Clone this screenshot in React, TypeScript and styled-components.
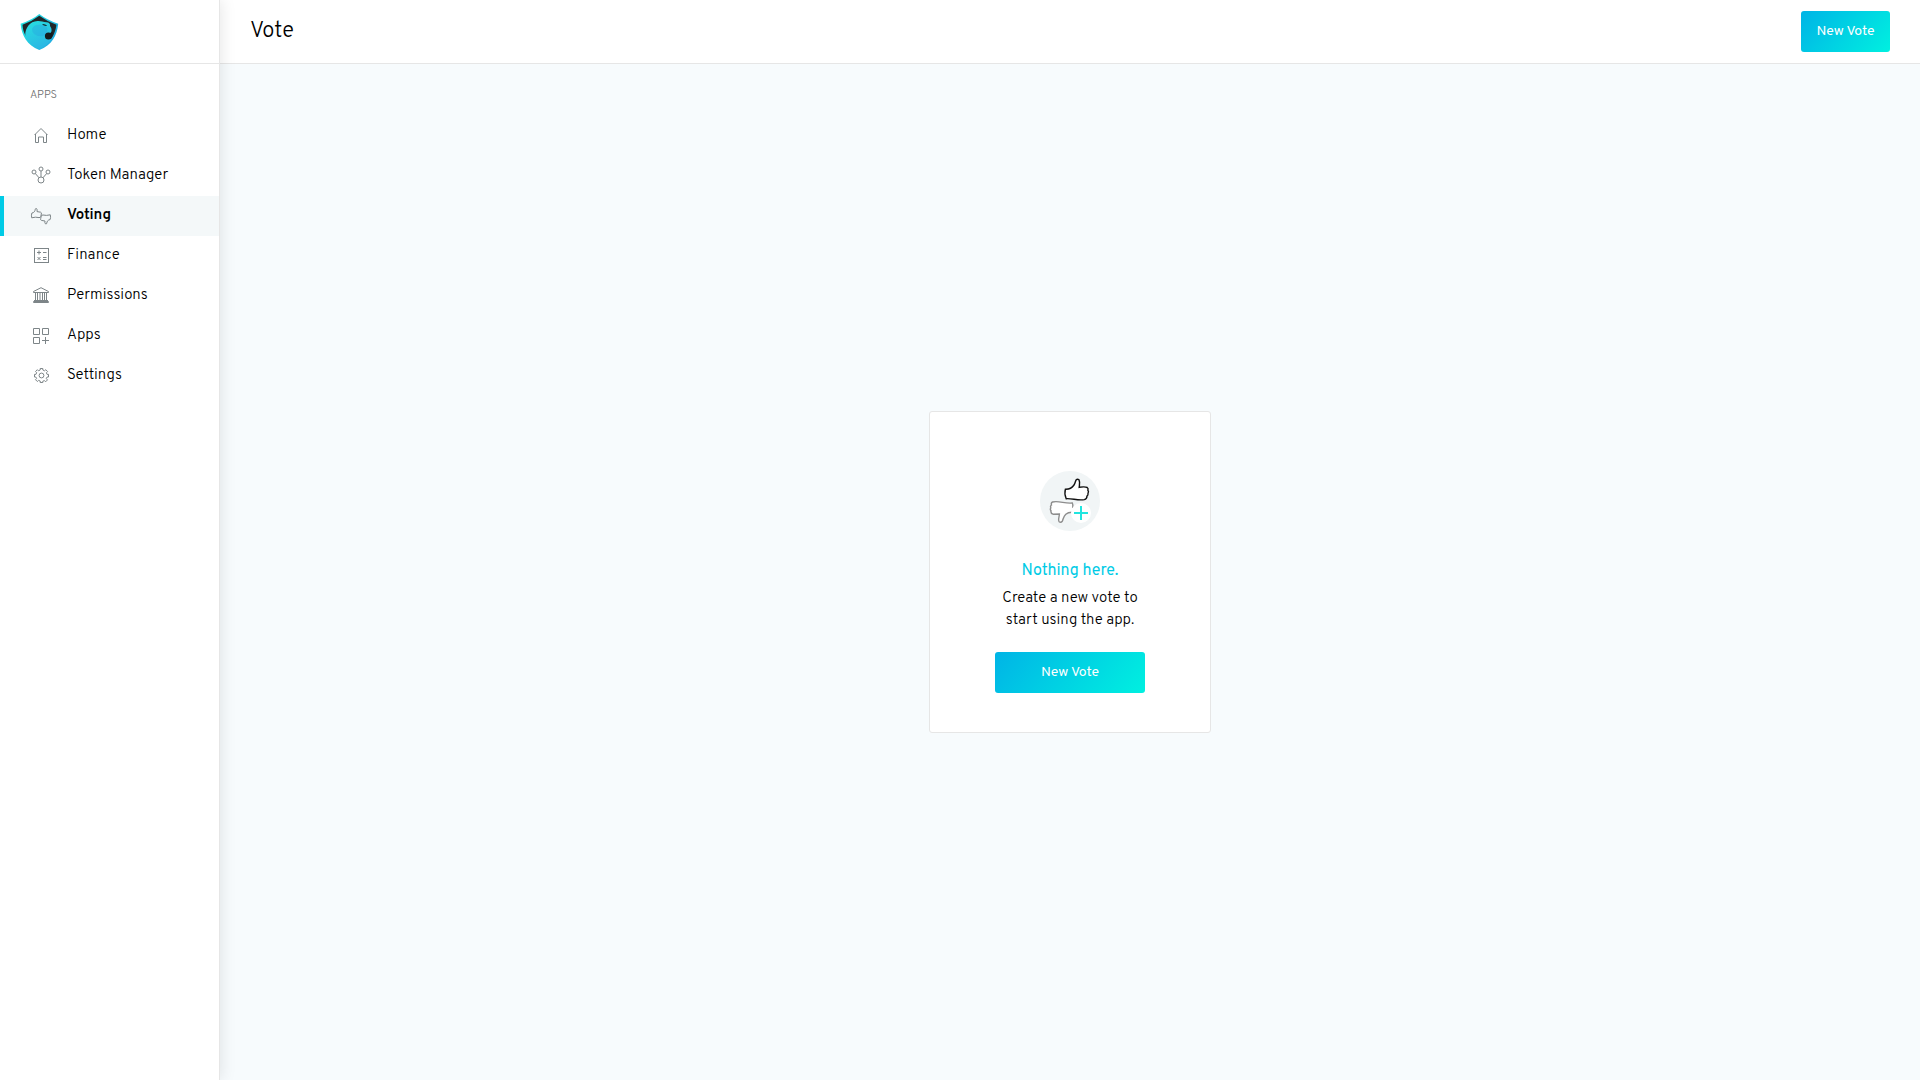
import React from "react";
import styled, { createGlobalStyle } from "styled-components";

const GlobalStyle = createGlobalStyle`
  *, *::before, *::after { box-sizing: border-box; }
  body {
    margin: 0;
    background: #f7fbfd;
    color: #000;
    font-family: Overpass, Roboto, "Liberation Sans", sans-serif;
    font-weight: 300;
  }
  h1, h2, p, ul { margin: 0; padding: 0; }
`;

const Layout = styled.div`
  display: flex;
  min-height: 100vh;
`;

const Sidebar = styled.aside`
  flex: 0 0 220px;
  background: #fff;
  border-right: 1px solid #e6e6e6;
  box-shadow: 1px 0 15px rgba(0, 0, 0, 0.1);
  z-index: 1;
`;

const Brand = styled.div`
  display: flex;
  align-items: center;
  height: 64px;
  padding-left: 20px;
  border-bottom: 1px solid #e6e6e6;
`;

const BrandLink = styled.a`
  display: flex;
`;

const NavHeading = styled.h2`
  padding: 21px 30px 11px;
  color: #707070;
  font-size: 11px;
  font-weight: 300;
  line-height: 20px;
`;

const NavList = styled.ul`
  list-style: none;
`;

const NavLink = styled.a<{ $active?: boolean }>`
  display: flex;
  align-items: center;
  gap: 15px;
  height: 40px;
  padding-left: 26px;
  border-left: 4px solid ${(p) => (p.$active ? "#00cbe6" : "transparent")};
  background: ${(p) => (p.$active ? "#f4f8f9" : "transparent")};
  color: #000;
  font-size: 15px;
  font-weight: ${(p) => (p.$active ? 600 : 300)};
  line-height: 20px;
  text-decoration: none;
`;

const Page = styled.div`
  display: flex;
  flex: 1;
  flex-direction: column;
`;

const Header = styled.header`
  display: flex;
  align-items: center;
  justify-content: space-between;
  height: 64px;
  padding: 0 30px;
  background: #fff;
  border-bottom: 1px solid #e6e6e6;
`;

const Title = styled.h1`
  font-size: 22px;
  font-weight: 300;
  line-height: 32px;
`;

const Button = styled.button<{ $wide?: boolean }>`
  width: ${(p) => (p.$wide ? "150px" : "auto")};
  min-width: 89px;
  height: 41px;
  padding: 0 15px;
  border: 0;
  border-radius: 3px;
  background: linear-gradient(130deg, #00b4e6, #00f0e0);
  color: #fff;
  font: inherit;
  font-size: 14px;
  font-weight: 400;
  cursor: pointer;
`;

const Content = styled.main`
  display: flex;
  flex: 1;
  align-items: center;
  justify-content: center;
`;

const Card = styled.section`
  display: flex;
  flex-direction: column;
  align-items: center;
  width: 282px;
  padding: 59px 40px 39px;
  background: #fff;
  border: 1px solid #e6e6e6;
  border-radius: 3px;
  text-align: center;
`;

const CardTitle = styled.h2`
  padding-top: 27px;
  color: #00cbe6;
  font-size: 16px;
  font-weight: 400;
  line-height: 26px;
`;

const CardText = styled.p`
  width: 170px;
  padding: 4px 0 20px;
  font-size: 15px;
  line-height: 22px;
`;

const Logo = () => (
  <svg width="40" height="40" viewBox="0 0 40 40" role="img" aria-label="Aragon">
    <defs>
      <linearGradient id="shield" x1="0" y1="0.2" x2="1" y2="0.8">
        <stop offset="0" stopColor="#25e6e2" />
        <stop offset="1" stopColor="#20a5e0" />
      </linearGradient>
      <linearGradient id="bird" x1="0.2" y1="0" x2="0.7" y2="1">
        <stop offset="0" stopColor="#27dce0" />
        <stop offset="1" stopColor="#2bb4e4" />
      </linearGradient>
    </defs>
    <path d="M19.3 2 Q27 8 38.2 11.8 C37 24 32 33 19.3 38 C7 33 1.7 24 .6 11.8 Q12 8 19.3 2Z" fill="url(#shield)" />
    <path d="M19.3 3.8 Q27 9.5 36.4 12.8 C36 17 34.5 21.5 32.3 25 L5.4 23.5 C3.6 20 2.7 16.5 2.5 12.8 Q12 9.5 19.3 3.8Z" fill="#20282b" />
    <path d="M5.2 23.3 C5.2 16 9.8 9.3 17.5 9 C21 8.7 23 10.3 27 10.2 C29.8 10.8 30.3 12.4 30 14 C31.4 15.8 32 17.8 31.3 19.7 C30.9 20.7 30.2 21.2 29.3 21 C26.5 20.6 25 22 25 24 C25.2 26.3 27 27.6 29 27.5 C31 27.3 32 26 32.4 24.6 C30 30 27 34 19.3 37 C12 33.7 7.5 29.5 5.2 23.3Z" fill="url(#bird)" />
    <path d="M32.5 19.5 Q33 24.5 31 26.8 L27 24 Z" fill="#141c1f" />
    <circle cx="28.4" cy="24" r="3.5" fill="#141c1f" />
    <path d="M12 17 C13 13.5 17 12 22 13 C28 13.5 29 18 25 23 C20 26 12 23 12 17Z" fill="#299ee0" opacity=".35" />
    <path d="M22 12.2 Q25 11.7 27.2 13.7 Q24.5 14.6 22 12.2Z" fill="#14333c" />
  </svg>
);

const iconPaths: Record<string, React.ReactNode> = {
  home: <path d="M4.5 10 L11 3.5 17.5 10 M5.5 9v8.5h3v-5.5h5v5.5h3V9" />,
  token: (
    <>
      <circle cx="11" cy="4" r="2" />
      <circle cx="4" cy="7" r="2" />
      <circle cx="18" cy="7" r="2" />
      <circle cx="11" cy="15" r="3" />
      <path d="M11 6v6M5.3 8.5l3.8 4.3M16.7 8.5l-3.8 4.3" />
    </>
  ),
  voting: (
    <>
      <path d="M1.9 8 C4 7.8 5 6.3 5.3 4.2 Q5.6 3.1 6.5 3.6 Q7.5 4.4 7 6.6 L10.6 7.2 Q11.8 7.6 11.3 9 L10.8 11.5 Q10.4 12.7 9 12.6 L5.5 12.2 1.7 12.8 Q1.1 10 1.9 8Z" />
      <path d="M20.1 14.6 C18 14.8 17 16.3 16.7 18.3 Q16.4 19.4 15.5 18.9 Q14.5 18.1 15 16 L11.4 15.4 Q10.2 15 10.7 13.6 L11.2 11.1 Q11.6 9.9 13 10 L16.5 10.4 20.3 9.8 Q20.9 12.6 20.1 14.6Z" />
    </>
  ),
  finance: (
    <>
      <rect x="4.5" y="3.5" width="14" height="14" />
      <path d="M7 7.5h4M9 5.5v4M13 7.5h3.5M7.5 12l3 3M10.5 12l-3 3M13 12.5h3.5M13 14.5h3.5" />
    </>
  ),
  permissions: (
    <path d="M3.5 6.5 11 2.7l7.5 3.8v1h-15zM5.5 7.5v8M7.5 7.5v8M10 7.5v8M12.5 7.5v8M14.5 7.5v8M16.5 7.5v8M4 15.5h14M3.5 16.5h15v1h-15z" />
  ),
  apps: (
    <path d="M3.5 3.5h6v6h-6zM12.5 3.5h6v6h-6zM3.5 12.5h6v6h-6zM12 15.5h7M15.5 12v7" />
  ),
  settings: (
    <>
      <circle cx="11.5" cy="10.5" r="2.4" />
      <path d="M10.2 5V3.5h2.6V5l1.8.8 1.2-1.1 1.8 1.9-1.2 1.2.7 1.6h1.4V12h-1.4l-.8 1.7 1.2 1.2-1.9 1.9-1.1-1.2-1.7.6V17.5h-2.6v-1.5l-1.7-.6-1.2 1.1-1.8-1.8 1.1-1.2L5.8 12H4.5V9.4h1.4l.8-1.7-1.2-1.1 1.9-1.9 1.1 1.1z" />
    </>
  ),
};

const NavIcon = ({ name }: { name: string }) => (
  <svg width="22" height="22" viewBox="0 0 22 22" fill="none" stroke="#7d8588" strokeWidth="1" aria-hidden="true">
    {iconPaths[name]}
  </svg>
);

const VoteArt = () => (
  <svg width="60" height="60" viewBox="0 0 60 60" fill="none" aria-hidden="true">
    <circle cx="30" cy="30" r="30" fill="#f1f5f6" />
    <path
      d="M25.4 18.2 Q31 18.4 34 14 C35.3 12 35.4 10 36.2 8.8 Q37.5 7.5 39 8.8 C40.2 11 39.4 13.5 39.2 16.3 C42 15.8 45 15.4 47.2 16.5 Q48.5 17.5 47.9 19.3 Q49 20.6 48 22.4 Q48.3 24.2 47 25 Q47 28 44.3 28.6 C38 29.8 32 27.2 26.2 27.7 C25 24.8 24.4 21.5 25.4 18.2Z"
      fill="#fff" stroke="#111" strokeWidth="1.4"
    />
    <path
      d="M32.6 37 C33 35 33 33.5 32.3 32 C25 33 19 29.3 12.5 31 Q10.8 31.8 11.5 34 Q10 35 10.8 36.8 Q9.8 38.5 11 39.8 Q10.5 42.5 13 43.2 L19.4 43 C19.3 46 17.7 49 19.2 50.7 Q20.8 52 22.3 50.2 C23.5 47.5 23.5 45.2 25.8 43.2 Q28 41.3 32 41.3"
      fill="#fff" stroke="#8d8d8d" strokeWidth="1.4"
    />
    <circle cx="41" cy="42" r="10" fill="#fff" />
    <path d="M34 42h14M41 35v14" stroke="#21e5df" strokeWidth="2" />
  </svg>
);

const apps = [
  { label: "Home", icon: "home" },
  { label: "Token Manager", icon: "token" },
  { label: "Voting", icon: "voting", active: true },
  { label: "Finance", icon: "finance" },
  { label: "Permissions", icon: "permissions" },
  { label: "Apps", icon: "apps" },
  { label: "Settings", icon: "settings" },
];

export default function App() {
  return (
    <>
      <GlobalStyle />
      <Layout>
        <Sidebar>
          <Brand>
            <BrandLink href="#home">
              <Logo />
            </BrandLink>
          </Brand>
          <nav aria-labelledby="apps-heading">
            <NavHeading id="apps-heading">APPS</NavHeading>
            <NavList>
              {apps.map((app) => (
                <li key={app.label}>
                  <NavLink href={`#${app.icon}`} $active={app.active} aria-current={app.active ? "page" : undefined}>
                    <NavIcon name={app.icon} />
                    <span>{app.label}</span>
                  </NavLink>
                </li>
              ))}
            </NavList>
          </nav>
        </Sidebar>
        <Page>
          <Header>
            <Title>Vote</Title>
            <Button type="button">New Vote</Button>
          </Header>
          <Content>
            <Card>
              <VoteArt />
              <CardTitle>Nothing here.</CardTitle>
              <CardText>Create a new vote to start using the app.</CardText>
              <Button type="button" $wide>New Vote</Button>
            </Card>
          </Content>
        </Page>
      </Layout>
    </>
  );
}
